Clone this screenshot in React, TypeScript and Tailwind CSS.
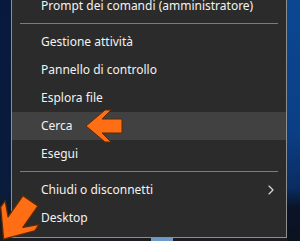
import { ChevronRight } from "lucide-react";

type Row = { label: string; active?: boolean; sub?: boolean };

const topRows: Row[] = [
  { label: "Gestione attività" },
  { label: "Pannello di controllo" },
  { label: "Esplora file" },
  { label: "Cerca", active: true },
  { label: "Esegui" },
];

const bottomRows: Row[] = [
  { label: "Chiudi o disconnetti", sub: true },
  { label: "Desktop" },
];

function MenuRow({ row }: { row: Row }) {
  return (
    <div
      className={
        "flex h-[28px] shrink-0 items-center justify-between pl-[29px] pr-[7px] " +
        (row.active ? "bg-[#414141]" : "")
      }
    >
      <span>{row.label}</span>
      {row.sub && <ChevronRight className="h-[16px] w-[16px] text-[#d8d8d8]" strokeWidth={1.75} />}
    </div>
  );
}

function Separator() {
  return (
    <div className="h-[8px] shrink-0 pt-[3px] px-[8px]">
      <div className="h-px bg-[#7d7d7d]" />
    </div>
  );
}

// orange pointer drawn on top of the screenshot
function Arrow({ className, transform, size }: { className: string; transform: string; size: number }) {
  const h = size / 2;
  return (
    <svg className={"absolute " + className} viewBox={`${-h} ${-h} ${size} ${size}`} width={size} height={size}>
      <polygon
        transform={transform}
        points="-18,0 1,-16 7,-16 -2,-7 18,-7 18,7 -2,7 7,16 1,16"
        fill="#ff6d14"
        stroke="#5a2a08"
        strokeWidth="1"
        strokeLinejoin="round"
      />
    </svg>
  );
}

export default function App() {
  return (
    <div
      className="relative flex h-[241px] w-[300px] overflow-hidden text-[12px] text-[#f2f2f2]"
      style={{ fontFamily: '"Noto Sans", "Open Sans", sans-serif' }}
    >
      <div className="w-[11px] shrink-0 bg-[linear-gradient(180deg,#071a3e_0%,#0a1c3c_80%,#15181e_90%,#1b1b1e_100%)]" />
      <div className="flex w-[276px] shrink-0 flex-col">
        <div className="flex h-[238px] flex-col overflow-hidden border-x border-b border-[#8e8e8e] bg-[#2b2b2b]">
          <div className="-mt-[8px] flex h-[28px] shrink-0 items-center pl-[29px]">
            <span>Prompt dei comandi (amministratore)</span>
          </div>
          <Separator />
          {topRows.map((r) => (
            <MenuRow key={r.label} row={r} />
          ))}
          <Separator />
          {bottomRows.map((r) => (
            <MenuRow key={r.label} row={r} />
          ))}
        </div>
        <div className="flex h-[3px] bg-[#1a1c22]">
          <div className="ml-[140px] w-[22px] bg-[#6f9ac8]" />
        </div>
      </div>
      <div className="flex-1 bg-[linear-gradient(180deg,#0b4792_0%,#0a3f85_55%,#0a2c62_78%,#0a1428_86%,#0b1220_100%)]" />
      <Arrow className="left-[85px] top-[107px]" size={38} transform="" />
      <Arrow className="left-[-10px] top-[193px]" size={54} transform="rotate(-55) scale(1.3)" />
    </div>
  );
}
